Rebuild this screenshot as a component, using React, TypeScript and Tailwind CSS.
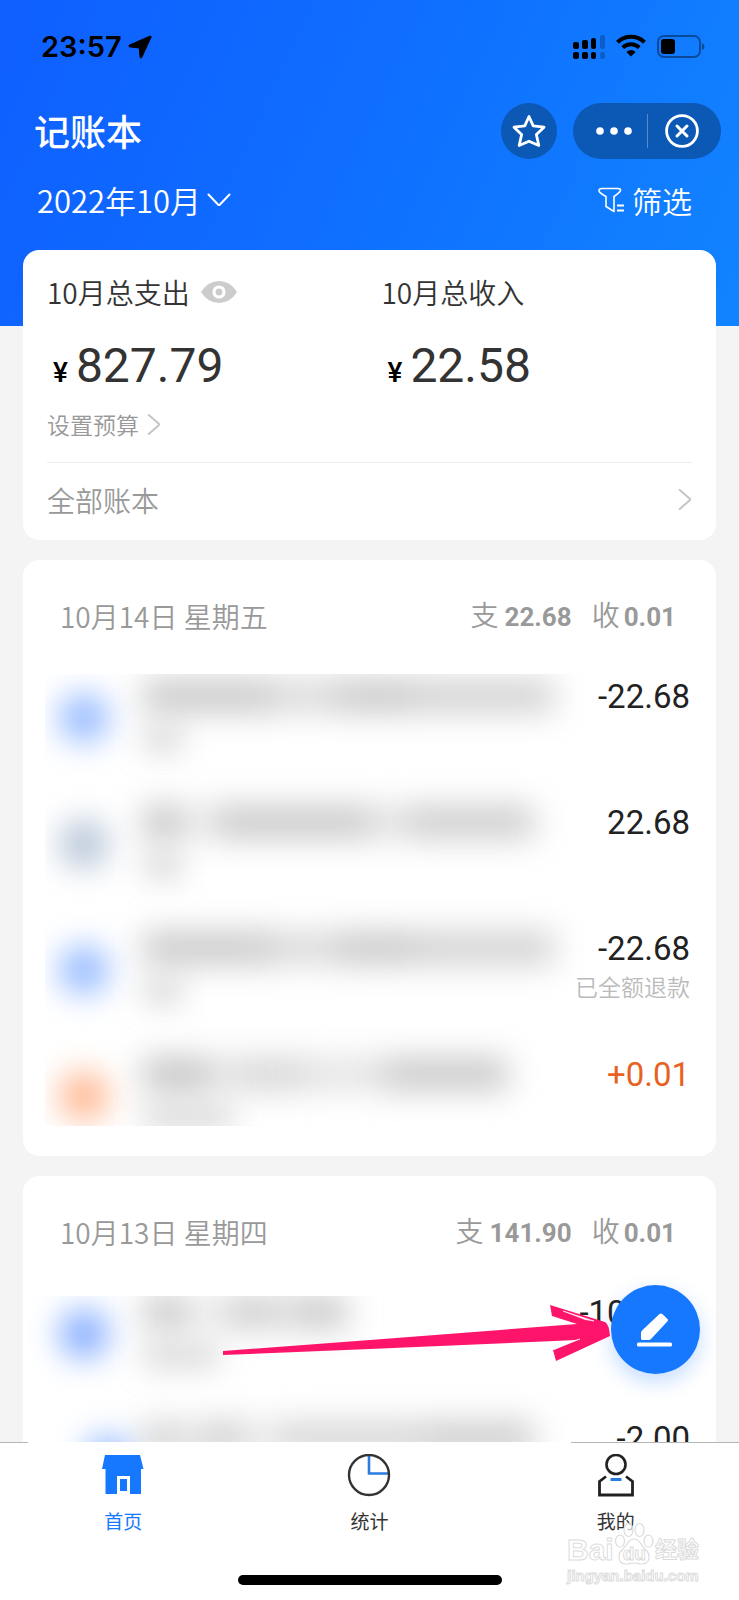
import { ReactNode } from "react";

interface Blob {
    id: string;
    className: string;
}

interface Entry {
    id: string;
    amount: string;
    income?: boolean;
    note?: string;
    icon: string;
    title: Blob[];
    subtitle: string;
}

interface Day {
    date: string;
    weekday: string;
    out: string;
    in: string;
    listClass: string;
    bodyClass: string;
    entries: Entry[];
}

const LONG_TITLE: Blob[] = [
    { id: "a", className: "w-[130px] bg-neutral-400/60" },
    { id: "b", className: "w-[64px] bg-neutral-400/40" },
    { id: "c", className: "w-[76px] bg-neutral-400/60" },
    { id: "d", className: "flex-1 bg-neutral-400/50" },
];

const DAYS: Day[] = [
    {
        date: "10月14日",
        weekday: "星期五",
        out: "22.68",
        in: "0.01",
        listClass: "ml-[22px]",
        bodyClass: "pb-[30px]",
        entries: [
            { id: "1", amount: "-22.68", icon: "bg-[#8fb6ff]", title: LONG_TITLE, subtitle: "w-10" },
            {
                id: "2",
                amount: "22.68",
                icon: "bg-[#b4c3d6]",
                title: [
                    { id: "a", className: "w-10 bg-neutral-400/65" },
                    { id: "b", className: "w-8 bg-neutral-400/20" },
                    { id: "c", className: "w-[156px] bg-neutral-400/60" },
                    { id: "d", className: "w-9 bg-neutral-400/30" },
                    { id: "e", className: "flex-1 bg-neutral-400/55 mr-5" },
                ],
                subtitle: "w-10",
            },
            { id: "3", amount: "-22.68", note: "已全额退款", icon: "bg-[#8fb6ff]", title: LONG_TITLE, subtitle: "w-10" },
            {
                id: "4",
                amount: "+0.01",
                income: true,
                icon: "bg-[#ffb48c]",
                title: [
                    { id: "a", className: "w-[68px] bg-neutral-400/65" },
                    { id: "b", className: "w-6 bg-neutral-400/25" },
                    { id: "c", className: "w-[70px] bg-neutral-400/45" },
                    { id: "d", className: "w-[80px] bg-neutral-400/30" },
                    { id: "e", className: "flex-1 bg-neutral-400/60 mr-[46px]" },
                ],
                subtitle: "w-[90px]",
            },
        ],
    },
    {
        date: "10月13日",
        weekday: "星期四",
        out: "141.90",
        in: "0.01",
        listClass: "ml-[5px] pl-[17px] [clip-path:inset(6px_0_0_0)]",
        bodyClass: "",
        entries: [
            {
                id: "1",
                amount: "-100.00",
                icon: "bg-[#7fa9ff]",
                title: [
                    { id: "a", className: "w-11 bg-neutral-400/60" },
                    { id: "b", className: "w-10 bg-neutral-400/20" },
                    { id: "c", className: "w-11 bg-neutral-400/55" },
                    { id: "d", className: "w-7 bg-neutral-400/40" },
                    { id: "e", className: "w-12 bg-neutral-400/60" },
                ],
                subtitle: "w-[76px]",
            },
            {
                id: "2",
                amount: "-2.00",
                icon: "bg-[#8fb6ff] ml-6",
                title: [
                    { id: "a", className: "w-9 bg-neutral-400/50" },
                    { id: "b", className: "w-7 bg-neutral-400/30" },
                    { id: "c", className: "w-9 bg-neutral-400/55" },
                    { id: "d", className: "w-8 bg-neutral-400/20" },
                    { id: "e", className: "w-[150px] bg-neutral-400/45" },
                    { id: "f", className: "flex-1 bg-neutral-400/55 mr-5" },
                ],
                subtitle: "w-[76px]",
            },
        ],
    },
];

function Chevron({ className }: { className: string }) {
    return (
        <svg viewBox="0 0 14 24" fill="none" stroke="#c4c4c4" strokeWidth="2" strokeLinecap="round" strokeLinejoin="round" className={className}>
            <path d="M1.5 2 L12 11.2 Q12.8 12 12 12.8 L1.5 22" />
        </svg>
    );
}

function StatusBar() {
    return (
        <div className="flex h-[94px] items-center justify-between pl-[41px] pr-[34px] text-black">
            <div className="flex items-center gap-[6px]">
                <span className="font-['Inter',sans-serif] text-[29px] font-semibold leading-8">23:57</span>
                <svg viewBox="0 0 24 24" className="h-6 w-6" fill="currentColor">
                    <path d="M21.6 .8 Q24 .2 23.4 2.6 L14.6 21.8 Q12.8 25 11.4 21.8 L10.9 14 Q10.8 13.2 10 13.2 L2 12.6 Q-.9 11.2 1.6 9.6 Z" />
                </svg>
            </div>
            <div className="flex items-center gap-[11px]">
                <svg viewBox="0 0 32 24" className="h-6 w-8" fill="currentColor">
                    <rect x="0" y="7" width="6" height="7" rx="2" />
                    <rect x="9" y="5" width="6" height="9" rx="2" />
                    <rect x="18" y="3" width="5" height="11" rx="2" />
                    <rect x="27" y="0" width="5" height="14" rx="2" opacity=".22" />
                    <rect x="0" y="17" width="6" height="7" rx="2" />
                    <rect x="9" y="17" width="6" height="7" rx="2" />
                    <rect x="18" y="17" width="5" height="7" rx="2" />
                    <rect x="27" y="17" width="5" height="7" rx="2" opacity=".22" />
                </svg>
                <svg viewBox="0 0 30 23" className="-mt-1 h-[23px] w-[30px]" fill="none" stroke="currentColor" strokeWidth="4">
                    <path d="M1.5 8.2 A19.5 19.5 0 0 1 28.5 8.2" />
                    <path d="M6.8 13.6 A12 12 0 0 1 23.2 13.6" />
                    <path d="M15 22.5 L10.4 17.9 A6.8 6.8 0 0 1 19.6 17.9 Z" fill="currentColor" stroke="none" />
                </svg>
                <svg viewBox="0 0 48 24" className="h-6 w-12">
                    <rect x="1" y="1" width="42" height="21" rx="6" fill="none" stroke="#000" strokeOpacity=".4" strokeWidth="2" />
                    <rect x="4" y="4" width="14" height="15" rx="3" fill="#000" />
                    <path d="M45 8 Q47.5 9 47.5 11.5 Q47.5 14 45 15 Z" fill="#000" fillOpacity=".4" />
                </svg>
            </div>
        </div>
    );
}

function Header() {
    return (
        <header className="bg-[linear-gradient(115deg,#0f5fff_0%,#0f6dff_45%,#1184ff_100%)] pb-[105px]">
            <StatusBar />
            <div className="mt-[9px] flex h-14 items-center justify-between pl-[34px] pr-[18px] text-white">
                <h1 className="pb-[3px] text-[36px] font-medium leading-[48px]">记账本</h1>
                <div className="flex items-center gap-4">
                    <button type="button" aria-label="收藏" className="flex h-14 w-14 items-center justify-center rounded-full bg-[#0c58b5]">
                        <svg viewBox="0 0 34 34" className="h-[34px] w-[34px]" fill="none" stroke="currentColor" strokeWidth="2.8" strokeLinejoin="round">
                            <path d="M17 2.5 L21.2 11.8 L32 13.2 L24.4 20.6 L26.8 31.5 L17 27.2 L7.2 31.5 L9.6 20.6 L2 13.2 L12.8 11.8 Z" />
                        </svg>
                    </button>
                    <div className="flex h-14 items-center rounded-full bg-[#0c58b5]">
                        <button type="button" aria-label="更多" className="flex h-14 w-[74px] items-center justify-center pl-2">
                            <svg viewBox="0 0 36 8" className="h-2 w-9" fill="currentColor">
                                <circle cx="4" cy="4" r="3.8" />
                                <circle cx="18" cy="4" r="3.8" />
                                <circle cx="32" cy="4" r="3.8" />
                            </svg>
                        </button>
                        <span className="h-[34px] w-px bg-white/30" />
                        <button type="button" aria-label="关闭" className="flex h-14 w-[73px] items-center pl-4">
                            <svg viewBox="0 0 36 36" className="h-9 w-9" fill="none" stroke="currentColor" strokeWidth="2.8" strokeLinecap="round">
                                <circle cx="18" cy="18" r="15.4" />
                                <path d="M13 13 L23 23 M23 13 L13 23" strokeWidth="3" />
                            </svg>
                        </button>
                    </div>
                </div>
            </div>
            <div className="mt-[22px] flex h-10 items-center justify-between pb-[2px] pl-[37px] pr-[47px] font-[350] text-white">
                <button type="button" className="flex items-center gap-[6px] text-[31px] leading-10">
                    2022年10月
                    <svg viewBox="0 0 24 14" className="h-[14px] w-6" fill="none" stroke="currentColor" strokeWidth="2" strokeLinecap="round">
                        <path d="M1.5 1.5 L11 11.5 Q12 12.5 13 11.5 L22.5 1.5" />
                    </svg>
                </button>
                <button type="button" className="flex items-center gap-2 text-[30px] leading-10">
                    <svg viewBox="0 0 26 26" className="h-[26px] w-[26px]" fill="none" stroke="currentColor" strokeWidth="1.6" strokeLinejoin="round">
                        <path d="M1 4 Q1 1.5 3.5 1.5 H20 Q23 1.5 22.5 3.6 Q21.8 5.6 16 9.5 V24.5 L8 19.5 V9.5 Q1.6 6 1 4 Z" />
                        <path d="M19 18.5 H26 M19 23.5 H26" strokeWidth="2" />
                    </svg>
                    筛选
                </button>
            </div>
        </header>
    );
}

function Money({ value }: { value: string }) {
    return (
        <p className="mt-[30px] flex h-12 items-baseline gap-2 pl-[6px] font-['Roboto',sans-serif] leading-[48px]">
            <span className="text-[28px] font-medium text-black">¥</span>
            <span className="text-[48px] text-[#333]">{value}</span>
        </p>
    );
}

function Summary() {
    return (
        <section className="rounded-2xl bg-white px-6 pt-[22px]">
            <div className="grid grid-cols-2 gap-6 text-[#333]">
                <div>
                    <div className="flex h-10 items-center gap-[11px]">
                        <h2 className="text-[28px] font-[350] leading-10">10月总支出</h2>
                        <button type="button" aria-label="隐藏金额">
                            <svg viewBox="0 0 36 22" className="h-[22px] w-9">
                                <path d="M0 11 Q7 0 18 0 Q29 0 36 11 Q29 22 18 22 Q7 22 0 11 Z" fill="#ccc" />
                                <circle cx="18" cy="11" r="5" fill="#ccc" stroke="#fff" strokeWidth="3.2" />
                            </svg>
                        </button>
                    </div>
                    <Money value="827.79" />
                </div>
                <div>
                    <h2 className="text-[28px] font-[350] leading-10">10月总收入</h2>
                    <Money value="22.58" />
                </div>
            </div>
            <a href="#budget" className="mt-[18px] flex h-8 w-fit items-center gap-2 text-[23px] font-[350] text-[#999]">
                设置预算
                <Chevron className="h-[23px] w-[14px]" />
            </a>
            <a href="#books" className="mt-[22px] flex h-[78px] items-center justify-between border-t border-[#eee] pb-1 text-[28px] font-[350] text-[#999]">
                全部账本
                <Chevron className="h-[23px] w-[14px]" />
            </a>
        </section>
    );
}

function EntryRow({ entry }: { entry: Entry }) {
    return (
        <li className="flex h-[126px] last:h-[74px]">
            {/* Redacted merchant */}
            <div className="relative flex flex-1 pl-[15px]" aria-hidden="true">
                <div className={`mt-[20px] h-12 w-12 shrink-0 rounded-full blur-[16px] ${entry.icon}`} />
                <div className="absolute inset-y-0 left-[98px] right-0">
                    <div className="mt-[6px] flex h-8 w-full pr-[18px] blur-[16px]">
                        {entry.title.map((blob) => (
                            <div key={blob.id} className={`h-8 ${blob.className}`} />
                        ))}
                    </div>
                    <div className={`mt-[14px] h-7 bg-neutral-400/35 blur-[14px] ${entry.subtitle}`} />
                </div>
            </div>
            <div className="w-[118px] text-right">
                <p className={`font-['Roboto',sans-serif] text-[33px] leading-[46px] ${entry.income ? "text-[#e8621f]" : "text-[#222]"}`}>
                    {entry.amount}
                </p>
                {entry.note && <p className="whitespace-nowrap text-[23px] font-[350] leading-7 text-[#bbb]">{entry.note}</p>}
            </div>
        </li>
    );
}

function DayCard({ day }: { day: Day }) {
    return (
        <section className={`rounded-2xl bg-white ${day.bodyClass}`}>
            <div className="flex h-[114px] items-center justify-between pb-[3px] pl-[37px] pr-10 text-[28px] leading-10 text-[#999]">
                <h2 className="font-[350]">
                    {day.date} {day.weekday}
                </h2>
                <div className="flex gap-5">
                    <p className="flex items-baseline gap-[6px]">
                        <span className="font-[350]">支</span>
                        <span className="font-['Roboto',sans-serif] text-[26px] font-bold">{day.out}</span>
                    </p>
                    <p className="flex items-baseline gap-1">
                        <span className="font-[350]">收</span>
                        <span className="font-['Roboto',sans-serif] text-[26px] font-bold">{day.in}</span>
                    </p>
                </div>
            </div>
            <ul className={`mr-[26px] overflow-hidden ${day.listClass}`}>
                {day.entries.map((entry) => (
                    <EntryRow key={entry.id} entry={entry} />
                ))}
            </ul>
        </section>
    );
}

function Tab({ href, label, active, children }: { href: string; label: string; active?: boolean; children: ReactNode }) {
    return (
        <a href={href} className={`flex flex-1 flex-col items-center gap-[11px] text-[19px] leading-6 ${active ? "text-[#1677ff]" : "text-[#333]"}`}>
            <svg viewBox="0 0 44 44" className="h-11 w-11" fill="none">
                {children}
            </svg>
            {label}
        </a>
    );
}

function TabBar() {
    return (
        <nav className="relative bg-white pb-[15px]">
            <div className="flex h-px justify-between">
                <span className="w-7 bg-[#b5b5b5]" />
                <span className="w-[168px] bg-[#b5b5b5]" />
            </div>
            <div className="flex pt-[11px]">
                <Tab href="#home" label="首页" active>
                    <path d="M4 1 H39 L42.5 15 H40 V40 H29 V22 H16 V40 H4.5 V15 H1 Z" fill="#1677ff" />
                    <rect x="19" y="25" width="7" height="12" fill="#1677ff" />
                </Tab>
                <Tab href="#stats" label="统计">
                    <path d="M22 1 V19.5 H42" stroke="#2b7ce0" strokeWidth="2.6" />
                    <circle cx="22" cy="21" r="20" stroke="#333" strokeWidth="2.4" />
                </Tab>
                <Tab href="#me" label="我的">
                    <circle cx="22" cy="10.5" r="9.5" stroke="#222" strokeWidth="2.6" />
                    <path d="M12 22.5 L5.5 27.5 V41 H38.5 V27.5 L32 22.5" stroke="#222" strokeWidth="2.8" />
                    <path d="M16.5 25.5 H27.5" stroke="#2b7ce0" strokeWidth="3" />
                </Tab>
            </div>
            <div className="mx-auto mt-[42px] h-[10px] w-[264px] rounded-full bg-black" />
        </nav>
    );
}

function Watermark() {
    return (
        <div className="pointer-events-none absolute bottom-[14px] right-[40px] w-[132px] font-['Liberation_Sans','Noto_Sans_CJK_SC',sans-serif] font-bold text-white [-webkit-text-stroke:1px_#dcdcdc]">
            <div className="flex h-[46px] items-end justify-between">
                <span className="text-[30px] leading-8">Bai</span>
                <span className="relative flex h-[46px] w-[40px] items-end justify-center">
                    <svg viewBox="0 0 40 46" className="absolute inset-0 h-[46px] w-[40px]" fill="#fff" fillOpacity=".7" stroke="#dcdcdc" strokeWidth="1.2">
                        <ellipse cx="6" cy="21" rx="4.5" ry="6" />
                        <ellipse cx="14.5" cy="10" rx="4.5" ry="6.5" />
                        <ellipse cx="25.5" cy="10" rx="4.5" ry="6.5" />
                        <ellipse cx="34.5" cy="21" rx="4.5" ry="6" />
                        <path d="M20 19 C26 19 27 26 32 30 C37 35 36 44 28 44 C24 44 23 43 20 43 C17 43 16 44 12 44 C4 44 3 35 8 30 C13 26 14 19 20 19 Z" />
                    </svg>
                    <span className="relative text-[19px] leading-6">du</span>
                </span>
                <span className="text-[22px] leading-8">经验</span>
            </div>
            <p className="text-[15px] leading-5">jingyan.baidu.com</p>
        </div>
    );
}

export default function App() {
    return (
        <div className="relative flex h-screen flex-col overflow-hidden bg-[#f4f4f4] font-['Noto_Sans_CJK_SC',sans-serif]">
            <div className="min-h-0 flex-1 overflow-y-auto [scrollbar-width:none]">
                <Header />
                <main className="-mt-[76px] flex flex-col gap-5 px-[23px]">
                    <Summary />
                    {DAYS.map((day) => (
                        <DayCard key={day.date} day={day} />
                    ))}
                </main>
            </div>
            <TabBar />

            {/* Add entry */}
            <button
                type="button"
                aria-label="记一笔"
                className="absolute bottom-[226px] right-[39px] flex h-[89px] w-[89px] items-center justify-center rounded-full bg-[#1677ff] pr-1 shadow-[0_8px_20px_rgba(22,119,255,0.25)]"
            >
                <svg viewBox="0 0 36 34" className="h-[34px] w-9" fill="#fff">
                    <path d="M23.5 1 Q25 -.2 26.3 1 L31.5 6 Q32.5 7.3 31.3 8.5 L15 26 Q14 27 12.5 27 H6.5 Q5 27 5 25.5 V20 Q5 18.500 6 17.500 Z" />
                    <rect x="1" y="29.5" width="35" height="4" rx="1.5" />
                </svg>
            </button>
            <svg viewBox="0 0 392 59" className="pointer-events-none absolute bottom-[237px] right-[126px] h-[59px] w-[392px]">
                <path d="M2 47 L149 36 L356 20 L331 12 L329 1 L384 18 Q388 20 389 32 L335 57 L332 46 L356 36 L149 45 L2 51 Z" fill="#ff146b" />
                <path d="M342 7 L373 17 L364 15.500 Z M333 45.500 L359 35 L350 37.500 Z" fill="#fff" stroke="#fff" strokeWidth=".6" />
            </svg>
            <Watermark />
        </div>
    );
}
